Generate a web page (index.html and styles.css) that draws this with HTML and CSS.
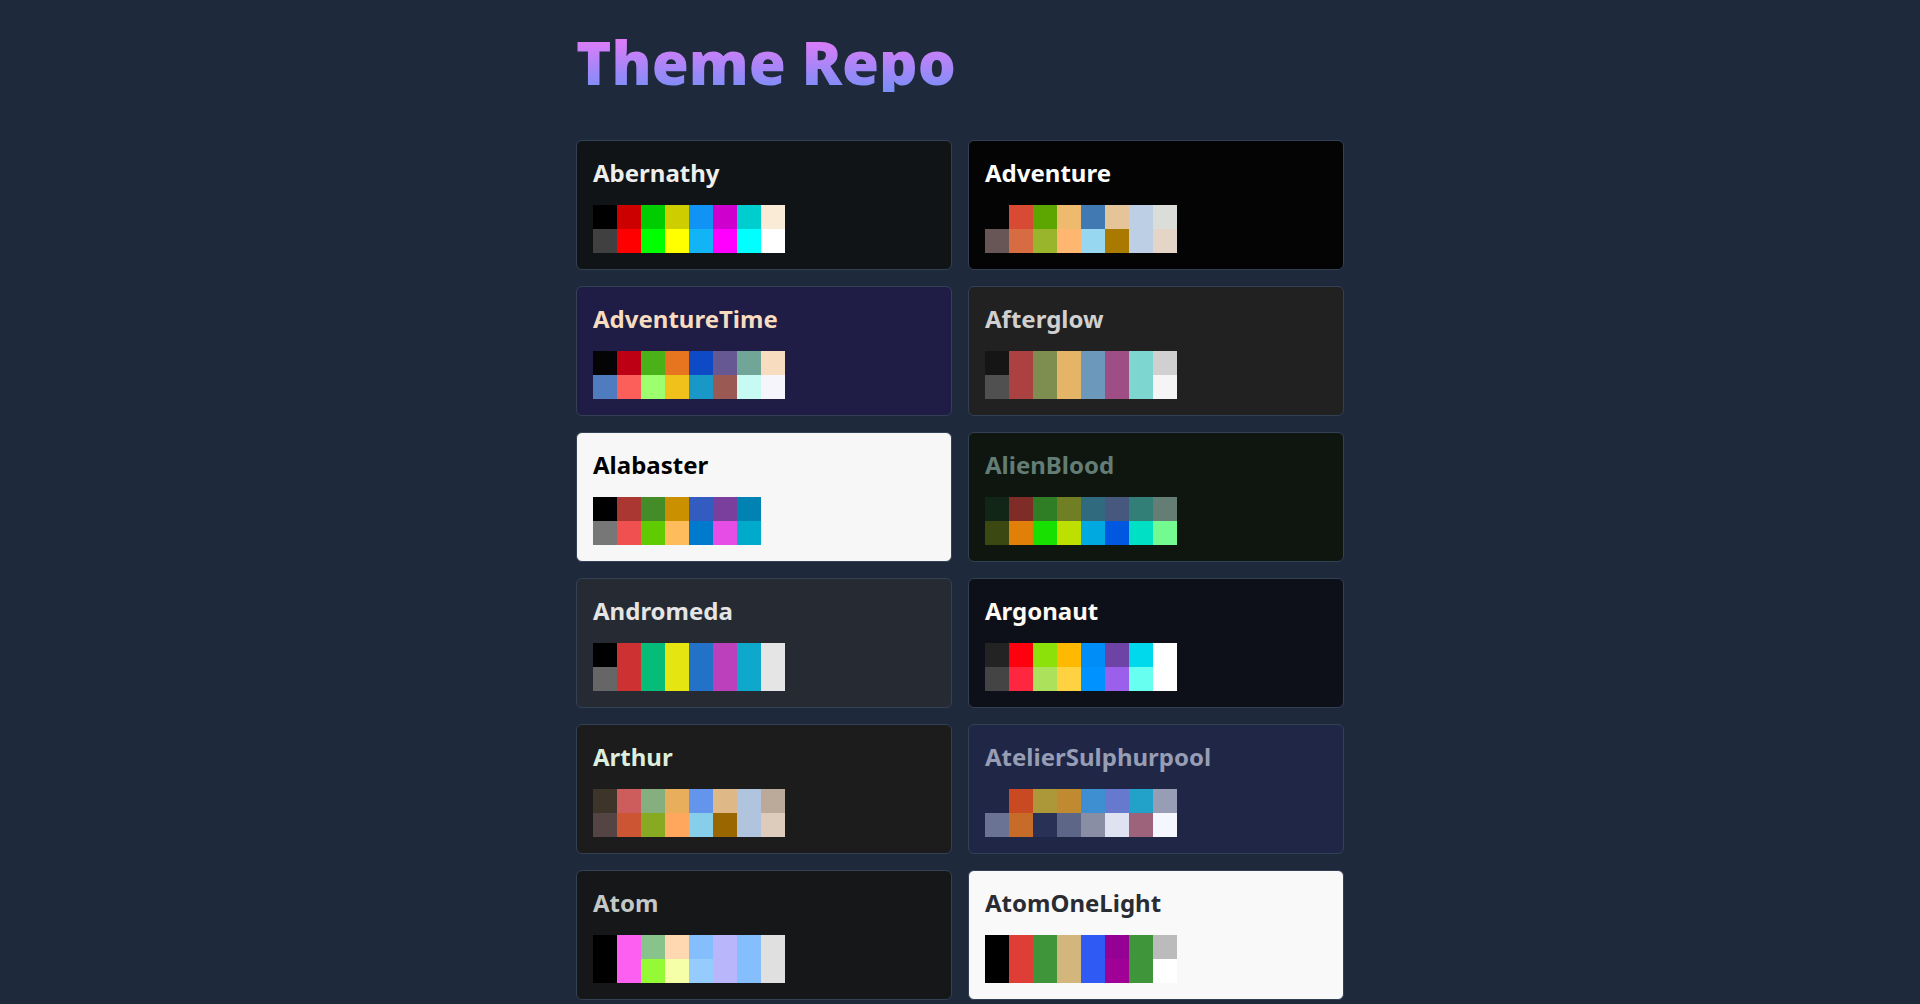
FILE: index.html
```html
<!DOCTYPE html>
<html lang="en">
<head>
<meta charset="utf-8">
<title>Theme Repo</title>
<link rel="stylesheet" href="styles.css">
</head>
<body>
<main class="page">
  <h1 class="brand">Theme Repo</h1>
  <div class="grid">
    <div class="card t-abernathy">
      <h2 class="name">Abernathy</h2>
      <div class="swatches">
        <span style="background:#000000"></span><span style="background:#cd0000"></span><span style="background:#00cd00"></span><span style="background:#cdcd00"></span><span style="background:#1093f5"></span><span style="background:#cd00cd"></span><span style="background:#00cdcd"></span><span style="background:#faebd7"></span>
        <span style="background:#404040"></span><span style="background:#ff0000"></span><span style="background:#00ff00"></span><span style="background:#ffff00"></span><span style="background:#11b5f6"></span><span style="background:#ff00ff"></span><span style="background:#00ffff"></span><span style="background:#ffffff"></span>
      </div>
    </div>
    <div class="card t-adventure">
      <h2 class="name">Adventure</h2>
      <div class="swatches">
        <span style="background:#040404"></span><span style="background:#d84a33"></span><span style="background:#5da602"></span><span style="background:#eebb6e"></span><span style="background:#417ab3"></span><span style="background:#e5c499"></span><span style="background:#bdcfe5"></span><span style="background:#dbded8"></span>
        <span style="background:#685656"></span><span style="background:#d76b42"></span><span style="background:#99b52c"></span><span style="background:#ffb670"></span><span style="background:#97d7ef"></span><span style="background:#aa7900"></span><span style="background:#bdcfe5"></span><span style="background:#e4d5c7"></span>
      </div>
    </div>
    <div class="card t-adventuretime">
      <h2 class="name">AdventureTime</h2>
      <div class="swatches">
        <span style="background:#050404"></span><span style="background:#bd0013"></span><span style="background:#4ab118"></span><span style="background:#e7741e"></span><span style="background:#0f4ac6"></span><span style="background:#665993"></span><span style="background:#70a598"></span><span style="background:#f8dcc0"></span>
        <span style="background:#4e7cbf"></span><span style="background:#fc5f5a"></span><span style="background:#9eff6e"></span><span style="background:#efc11a"></span><span style="background:#1997c6"></span><span style="background:#9b5953"></span><span style="background:#c8faf4"></span><span style="background:#f6f5fb"></span>
      </div>
    </div>
    <div class="card t-afterglow">
      <h2 class="name">Afterglow</h2>
      <div class="swatches">
        <span style="background:#151515"></span><span style="background:#ac4142"></span><span style="background:#7e8e50"></span><span style="background:#e5b567"></span><span style="background:#6c99bb"></span><span style="background:#9f4e85"></span><span style="background:#7dd6cf"></span><span style="background:#d0d0d0"></span>
        <span style="background:#505050"></span><span style="background:#ac4142"></span><span style="background:#7e8e50"></span><span style="background:#e5b567"></span><span style="background:#6c99bb"></span><span style="background:#9f4e85"></span><span style="background:#7dd6cf"></span><span style="background:#f5f5f5"></span>
      </div>
    </div>
    <div class="card t-alabaster">
      <h2 class="name">Alabaster</h2>
      <div class="swatches">
        <span style="background:#000000"></span><span style="background:#aa3731"></span><span style="background:#448c27"></span><span style="background:#cb9000"></span><span style="background:#325cc0"></span><span style="background:#7a3e9d"></span><span style="background:#0083b2"></span><span style="background:#f7f7f7"></span>
        <span style="background:#777777"></span><span style="background:#f05050"></span><span style="background:#60cb00"></span><span style="background:#ffbc5d"></span><span style="background:#007acc"></span><span style="background:#e64ce6"></span><span style="background:#00aacb"></span><span style="background:#f7f7f7"></span>
      </div>
    </div>
    <div class="card t-alienblood">
      <h2 class="name">AlienBlood</h2>
      <div class="swatches">
        <span style="background:#112616"></span><span style="background:#7f2b27"></span><span style="background:#2f7e25"></span><span style="background:#717f24"></span><span style="background:#2f6a7f"></span><span style="background:#47587f"></span><span style="background:#327f77"></span><span style="background:#647d75"></span>
        <span style="background:#3c4812"></span><span style="background:#e08009"></span><span style="background:#18e000"></span><span style="background:#bde000"></span><span style="background:#00aae0"></span><span style="background:#0058e0"></span><span style="background:#00e0c4"></span><span style="background:#73fa91"></span>
      </div>
    </div>
    <div class="card t-andromeda">
      <h2 class="name">Andromeda</h2>
      <div class="swatches">
        <span style="background:#000000"></span><span style="background:#cd3131"></span><span style="background:#05bc79"></span><span style="background:#e5e512"></span><span style="background:#2472c8"></span><span style="background:#bc3fbc"></span><span style="background:#0fa8cd"></span><span style="background:#e5e5e5"></span>
        <span style="background:#666666"></span><span style="background:#cd3131"></span><span style="background:#05bc79"></span><span style="background:#e5e512"></span><span style="background:#2472c8"></span><span style="background:#bc3fbc"></span><span style="background:#0fa8cd"></span><span style="background:#e5e5e5"></span>
      </div>
    </div>
    <div class="card t-argonaut">
      <h2 class="name">Argonaut</h2>
      <div class="swatches">
        <span style="background:#232323"></span><span style="background:#ff000f"></span><span style="background:#8ce10b"></span><span style="background:#ffb900"></span><span style="background:#008df8"></span><span style="background:#6d43a6"></span><span style="background:#00d8eb"></span><span style="background:#ffffff"></span>
        <span style="background:#444444"></span><span style="background:#ff2740"></span><span style="background:#abe15b"></span><span style="background:#ffd242"></span><span style="background:#0092ff"></span><span style="background:#9a5feb"></span><span style="background:#67fff0"></span><span style="background:#ffffff"></span>
      </div>
    </div>
    <div class="card t-arthur">
      <h2 class="name">Arthur</h2>
      <div class="swatches">
        <span style="background:#3d352a"></span><span style="background:#cd5c5c"></span><span style="background:#86af80"></span><span style="background:#e8ae5b"></span><span style="background:#6495ed"></span><span style="background:#deb887"></span><span style="background:#b0c4de"></span><span style="background:#bbaa99"></span>
        <span style="background:#554444"></span><span style="background:#cc5533"></span><span style="background:#88aa22"></span><span style="background:#ffa75d"></span><span style="background:#87ceeb"></span><span style="background:#996600"></span><span style="background:#b0c4de"></span><span style="background:#ddccbb"></span>
      </div>
    </div>
    <div class="card t-ateliersulphurpool">
      <h2 class="name">AtelierSulphurpool</h2>
      <div class="swatches">
        <span style="background:#202746"></span><span style="background:#c94922"></span><span style="background:#ac9739"></span><span style="background:#c08b30"></span><span style="background:#3d8fd1"></span><span style="background:#6679cc"></span><span style="background:#22a2c9"></span><span style="background:#979db4"></span>
        <span style="background:#6b7394"></span><span style="background:#c76b29"></span><span style="background:#293256"></span><span style="background:#5e6687"></span><span style="background:#898ea4"></span><span style="background:#dfe2f1"></span><span style="background:#9c637a"></span><span style="background:#f5f7ff"></span>
      </div>
    </div>
    <div class="card t-atom">
      <h2 class="name">Atom</h2>
      <div class="swatches">
        <span style="background:#000000"></span><span style="background:#fd5ff1"></span><span style="background:#87c38a"></span><span style="background:#ffd7b1"></span><span style="background:#85befd"></span><span style="background:#b9b6fc"></span><span style="background:#85befd"></span><span style="background:#e0e0e0"></span>
        <span style="background:#000000"></span><span style="background:#fd5ff1"></span><span style="background:#94fa36"></span><span style="background:#f5ffa8"></span><span style="background:#96cbfe"></span><span style="background:#b9b6fc"></span><span style="background:#85befd"></span><span style="background:#e0e0e0"></span>
      </div>
    </div>
    <div class="card t-atomonelight">
      <h2 class="name">AtomOneLight</h2>
      <div class="swatches">
        <span style="background:#000000"></span><span style="background:#de3e35"></span><span style="background:#3f953a"></span><span style="background:#d2b67c"></span><span style="background:#2f5af3"></span><span style="background:#950095"></span><span style="background:#3f953a"></span><span style="background:#bbbbbb"></span>
        <span style="background:#000000"></span><span style="background:#de3e35"></span><span style="background:#3f953a"></span><span style="background:#d2b67c"></span><span style="background:#2f5af3"></span><span style="background:#a00095"></span><span style="background:#3f953a"></span><span style="background:#ffffff"></span>
      </div>
    </div>
  </div>
</main>
</body>
</html>
```

FILE: styles.css
```css
* { box-sizing: border-box; }
html, body { margin: 0; padding: 0; }
body {
  background: #1e293b;
  font-family: "Noto Sans", "Open Sans", sans-serif;
  min-height: 100vh;
}
.page {
  width: 768px;
  margin: 0 auto;
  padding: 32px 0 48px;
}
.brand {
  margin: 0 0 48px;
  font-size: 60px;
  line-height: 60px;
  font-weight: 900;
  background: linear-gradient(to bottom, #e27bf8 10%, #7c8ef8 95%);
  -webkit-background-clip: text;
  background-clip: text;
  color: transparent;
  display: inline-block;
  vertical-align: top;
}
.grid {
  display: grid;
  grid-template-columns: 1fr 1fr;
  gap: 16px;
}
.card {
  border: 1px solid #334155;
  border-radius: 6px;
  padding: 16px;
  height: 130px;
}
.name {
  margin: 0 0 16px;
  font-size: 24px;
  line-height: 32px;
  font-weight: 700;
}
.swatches {
  display: grid;
  grid-template-columns: repeat(8, 24px);
  grid-auto-rows: 24px;
}
.t-abernathy { background: #111416; color: #eeeeec; }
.t-adventure { background: #040404; color: #feffff; }
.t-adventuretime { background: #1f1d45; color: #f8dcc0; }
.t-afterglow { background: #212121; color: #d0d0d0; }
.t-alabaster { background: #f7f7f7; color: #000000; }
.t-alienblood { background: #0f1610; color: #637d75; }
.t-andromeda { background: #262a33; color: #e5e5e5; }
.t-argonaut { background: #0e1019; color: #fffaf4; }
.t-arthur { background: #1c1c1c; color: #ddeedd; }
.t-ateliersulphurpool { background: #202746; color: #979db4; }
.t-atom { background: #161719; color: #c5c8c6; }
.t-atomonelight { background: #f9f9f9; color: #2a2c33; }
```
